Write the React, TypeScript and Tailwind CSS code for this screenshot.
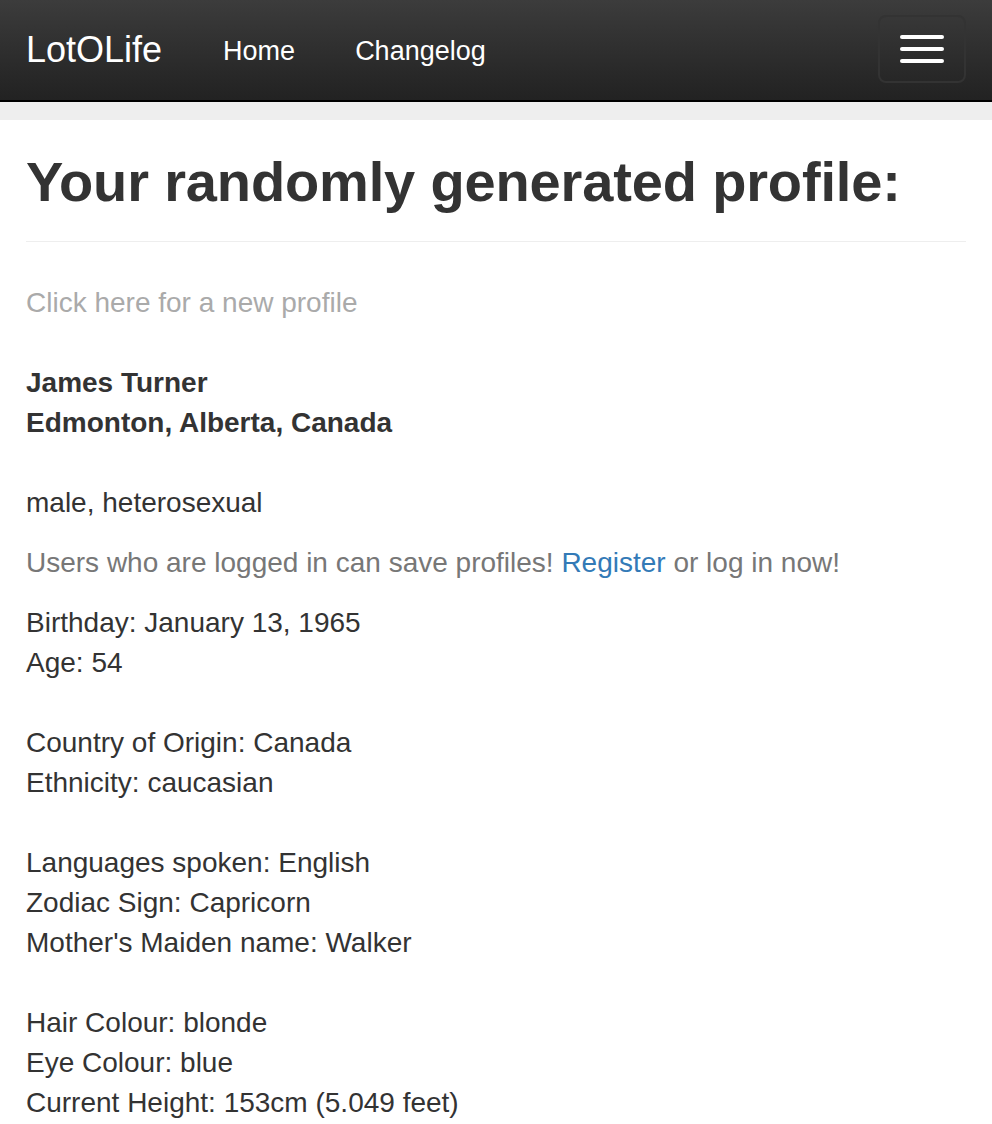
export default function App() {
  const groups: string[][] = [
    ['Birthday: January 13, 1965', 'Age: 54'],
    ['Country of Origin: Canada', 'Ethnicity: caucasian'],
    ['Languages spoken: English', 'Zodiac Sign: Capricorn', "Mother's Maiden name: Walker"],
    ['Hair Colour: blonde', 'Eye Colour: blue', 'Current Height: 153cm (5.049 feet)'],
  ]

  return (
    <div className="min-h-screen bg-white text-[#333] font-['Liberation_Sans',Arial,sans-serif]">
      {/* Navbar */}
      <nav className="h-[102px] bg-gradient-to-b from-[#3c3c3c] to-[#222] border-b-2 border-black flex items-center justify-between pl-[26px] pr-[26px]">
        <div className="flex items-center">
          <span className="text-[36px] leading-none text-white">LotOLife</span>
          <a className="ml-[61px] mt-[2px] text-[27px] leading-none text-white">Home</a>
          <a className="ml-[60px] mt-[2px] text-[27px] leading-none text-white">Changelog</a>
        </div>
        <button className="w-[88px] h-[68px] mt-[-2px] rounded-[8px] border-2 border-[#333] flex flex-col items-center justify-center gap-[8px]">
          <span className="block w-[44px] h-[4px] rounded-[2px] bg-white" />
          <span className="block w-[44px] h-[4px] rounded-[2px] bg-white" />
          <span className="block w-[44px] h-[4px] rounded-[2px] bg-white" />
        </button>
      </nav>
      <div className="h-[18px] bg-[#eee]" />

      {/* Content */}
      <div className="px-[26px]">
        <div className="mt-[31px] pb-[28px] border-b border-[#eee]">
          <h1 className="text-[56px] leading-[62px] font-bold tracking-[-0.15px]">Your randomly generated profile:</h1>
        </div>

        <div className="text-[28px] leading-[40px]">
          <p className="mt-[41px] text-[#aaa]">Click here for a new profile</p>

          <p className="mt-[40px] font-bold">
            James Turner
            <br />
            Edmonton, Alberta, Canada
          </p>
          <br />
          <p>male, heterosexual</p>

          <p className="mt-[20px] text-[#777]">
            Users who are logged in can save profiles! <a className="text-[#337ab7]">Register</a> or log in now!
          </p>

          <div className="mt-[20px]">
            {groups.map((g, i) => (
              <div key={i} className={i > 0 ? 'mt-[40px]' : ''}>
                {g.map((line) => (
                  <div key={line}>{line}</div>
                ))}
              </div>
            ))}
          </div>
        </div>
      </div>
    </div>
  )
}
